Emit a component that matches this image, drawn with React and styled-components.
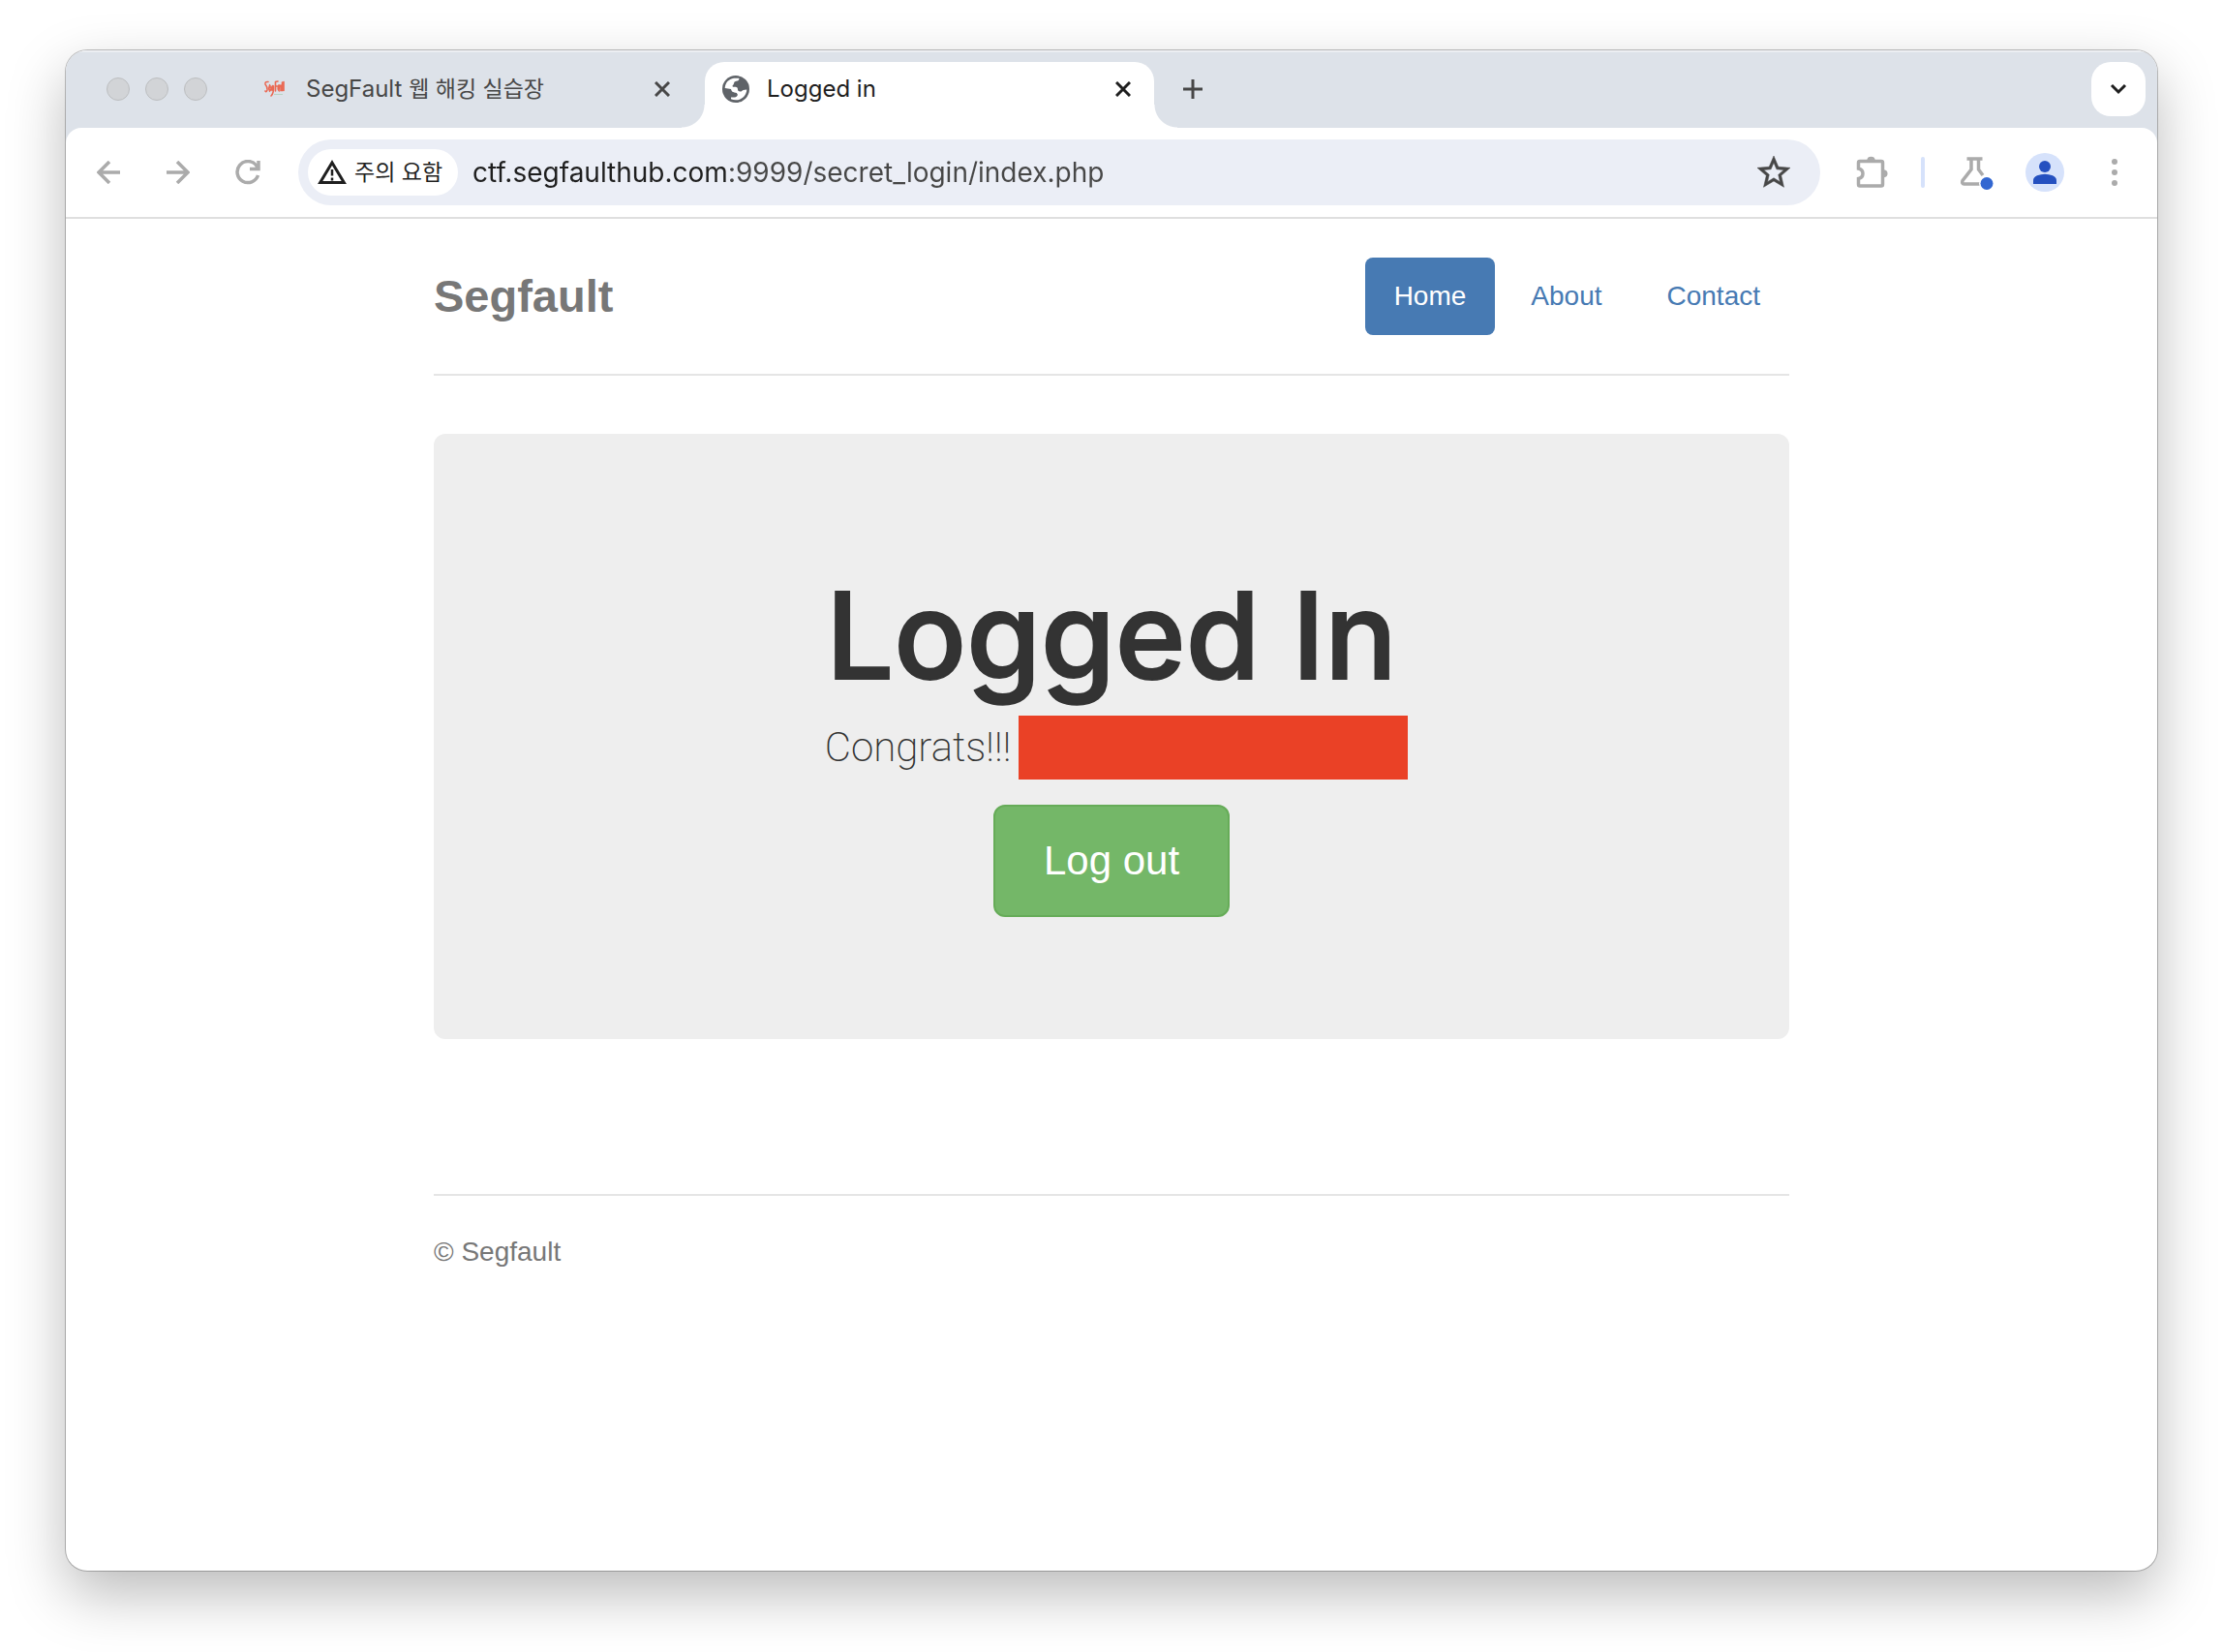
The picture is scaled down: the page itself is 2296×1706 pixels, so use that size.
import React from "react";
import styled, { createGlobalStyle, css } from "styled-components";

const UI_FONT = `Inter, "Noto Sans CJK KR", sans-serif`;
const PAGE_FONT = `"Liberation Sans", Arial, sans-serif`;

const GlobalStyle = createGlobalStyle`
  *, *::before, *::after { box-sizing: border-box; }
  body { margin: 0; background: #fff; font-family: ${UI_FONT}; }
  h1, h3, p { margin: 0; }
  button { border: 0; background: none; padding: 0; font: inherit; cursor: pointer; }
  svg { display: block; flex: none; }
`;

const Desktop = styled.div`
  display: flex;
  min-height: 100vh;
  padding: 52px 68px 84px;
`;

const Window = styled.div`
  display: flex;
  flex-direction: column;
  flex: 1;
  min-width: 0;
  overflow: hidden;
  border-radius: 22px;
  background: #fff;
  box-shadow: 0 0 0 1px rgba(0, 0, 0, 0.24), 0 24px 60px rgba(0, 0, 0, 0.27);
`;

/* Tab strip */

const TabStrip = styled.div`
  display: flex;
  height: 80px;
  padding: 12px 12px 0 42px;
  background: #dde2e9;
  box-shadow: inset 0 2px 0 #eceef2;
`;

const Lights = styled.div`
  display: flex;
  align-items: center;
  gap: 16px;
  height: 56px;
  margin-right: 38px;
`;

const Light = styled.button`
  width: 24px;
  height: 24px;
  border: 1px solid #bcbec0;
  border-radius: 50%;
  background: #d2d4d7;
`;

const Tabs = styled.div`
  display: flex;
  gap: 12px;
`;

const flare = css`
  content: "";
  position: absolute;
  bottom: 0;
  width: 24px;
  height: 24px;
`;

const Tab = styled.div`
  position: relative;
  display: flex;
  width: 464px;
  padding: 0 16px 12px 18px;
  align-items: center;
  gap: 18px;
  border-radius: 20px 20px 0 0;
  color: ${(p) => (p.$active ? "#1f1f1f" : "#474747")};
  background: ${(p) => (p.$active ? "#fff" : "transparent")};
  ${(p) =>
    p.$active &&
    css`
      &::before {
        ${flare}
        right: 100%;
        background: radial-gradient(circle at 0 0, transparent 23px, #fff 24px);
      }
      &::after {
        ${flare}
        left: 100%;
        background: radial-gradient(circle at 100% 0, transparent 23px, #fff 24px);
      }
    `}
`;

const TabTitle = styled.span`
  flex: 1;
  font-size: 24px;
  line-height: 32px;
  white-space: nowrap;
`;

const Hangul = styled.span`
  font-size: 23px;
`;

const IconButton = styled.button`
  display: flex;
  align-items: center;
  justify-content: center;
  width: ${(p) => p.$size || 48}px;
  height: ${(p) => p.$size || 48}px;
  color: ${(p) => p.$color || "#ababab"};
`;

const NewTab = styled(IconButton)`
  height: 56px;
  margin-left: 20px;
`;

const TabSearch = styled(IconButton)`
  margin-left: auto;
  border-radius: 20px;
  background: #fff;
`;

/* Toolbar */

const ToolbarBack = styled.div`
  background: #dde2e9;
`;

const Toolbar = styled.div`
  display: flex;
  align-items: center;
  gap: 28px;
  height: 94px;
  padding: 0 20px;
  border-bottom: 2px solid #dfdfdf;
  border-radius: 16px 16px 0 0;
  background: #fff;
`;

const NavButtons = styled.div`
  display: flex;
  gap: 24px;
`;

const Omnibox = styled.form`
  display: flex;
  flex: 1;
  align-items: center;
  min-width: 0;
  height: 68px;
  padding: 0 24px 0 10px;
  border-radius: 34px;
  background: #ebeef6;
`;

const SiteChip = styled.button`
  display: flex;
  flex: none;
  align-items: center;
  gap: 8px;
  height: 48px;
  padding: 0 16px 0 10px;
  border-radius: 24px;
  background: #fff;
  color: #1f1f1f;
  font-size: 23px;
  line-height: 32px;
`;

const Address = styled.input`
  flex: 1;
  min-width: 0;
  height: 48px;
  margin-left: 15px;
  padding: 0;
  border: 0;
  outline: 0;
  font-family: ${UI_FONT};
  font-size: 28px;
  color: #474747;
  /* host in the darker tone, port and path in the lighter one */
  background: linear-gradient(90deg, #1f1f1f 267px, #474747 267px);
  background-clip: text;
  -webkit-background-clip: text;
  -webkit-text-fill-color: transparent;
`;

const Divider = styled.span`
  width: 4px;
  height: 32px;
  border-radius: 2px;
  background: #d6e2fb;
`;

const Avatar = styled(IconButton)`
  border-radius: 50%;
  background: #d6e2fb;
`;

/* Web page */

const Container = styled.div`
  width: 100%;
  max-width: 1400px;
  margin: 0 auto;
  padding-top: 40px;
  font-family: ${PAGE_FONT};
  font-size: 28px;
  line-height: 40px;
  color: #333;
`;

const Header = styled.header`
  display: flex;
  align-items: center;
  justify-content: space-between;
  margin-bottom: 60px;
  padding-bottom: 40px;
  border-bottom: 2px solid #e5e5e5;
`;

const Brand = styled.h3`
  font-size: 47px;
  font-weight: 700;
  line-height: 56px;
  color: #777;
`;

const Nav = styled.nav`
  display: flex;
  gap: 7px;
`;

const NavLink = styled.a`
  padding: 20px 30px;
  border-radius: 8px;
  text-decoration: none;
  color: ${(p) => (p.$active ? "#fff" : "#477ab3")};
  background: ${(p) => (p.$active ? "#477ab3" : "transparent")};
`;

const Jumbotron = styled.main`
  display: flex;
  flex-direction: column;
  align-items: center;
  padding: 140px 96px 126px;
  border-radius: 12px;
  background: #eee;
`;

const Title = styled.h1`
  font-family: ${UI_FONT};
  font-size: 124px;
  font-weight: 500;
  line-height: 136px;
  -webkit-text-stroke: 2px #333;
`;

const Message = styled.p`
  display: flex;
  align-items: center;
  gap: 8px;
  margin: 15px 0 26px;
  padding-left: 10px;
  font-family: Roboto, sans-serif;
  font-size: 42px;
  font-weight: 200;
  line-height: 60px;
`;

const Redaction = styled.span`
  width: 402px;
  height: 66px;
  background: #ea4126;
`;

const LogOut = styled.button`
  height: 116px;
  padding: 0 50px;
  border: 2px solid #66ac58;
  border-radius: 12px;
  background: #74b768;
  color: #fff;
  font-size: 42px;
  line-height: 56px;
`;

const Footer = styled.footer`
  margin-top: 160px;
  padding: 38px 0;
  border-top: 2px solid #e5e5e5;
  color: #777;
`;

/* Icons */

const Stroke = ({ w, h, width = 3, children }) => (
  <svg width={w} height={h} viewBox={`0 0 ${w} ${h}`} fill="none" stroke="currentColor" strokeWidth={width} aria-hidden="true">
    {children}
  </svg>
);

const SegfaultIcon = () => (
  <Stroke w={28} h={28} width={1.6}>
    <g stroke="#ea6a55" strokeLinecap="round">
      <path d="M7 6.500 Q3.500 6 4 9 Q6.500 12 6 15 Q5 17.500 4 16" />
      <path d="M7.500 14 Q10 11 8.500 10 Q7 13 8.500 16 Q10 15 10.500 12 M12 10.500 Q10 12 11 15 Q12.500 14 12.500 10.500 Q13 18 10 21" />
      <path d="M14.500 6.500 V16 M14.500 6.500 L17 6 M14.500 11 H16.500 M17.800 10 Q16.500 14 18 15.500 L18.500 10 M20 10 V15.500 H21.500 V7 M23 6.500 V15.500" />
    </g>
    <path d="M13 19.500 H22" stroke="#b9d3c4" strokeWidth="1" />
  </Stroke>
);

const GlobeIcon = () => (
  <svg width="28" height="28" viewBox="0 0 28 28" aria-hidden="true">
    <circle cx="14" cy="14" r="14" fill="#5f6368" />
    <path
      fill="#fff"
      d="M2.700 13 C3 7.500 6.500 3.600 12 2.800 H17.500 Q17.500 5.800 14.500 5.800 Q12 6 12 8 Q12 9.500 10.800 10 Q10 11.800 12 11.800 H14 Q16 12 16 14 V15.300 Q17.500 17 19.500 16.500 Q21 14.500 25.300 14.500 C25 20.500 20.500 25.300 14 25.300 Q11 25.300 9 24.200 V22.500 H12.500 Q16 22 15.800 19.500 Q15.500 17.500 12.500 17.500 Q9.500 17 9 14 Z"
    />
  </svg>
);

const CloseIcon = () => (
  <Stroke w={16} h={16}>
    <path d="M1 1 L15 15 M15 1 L1 15" />
  </Stroke>
);

const PlusIcon = () => (
  <Stroke w={20} h={20}>
    <path d="M10 0 V20 M0 10 H20" />
  </Stroke>
);

const ChevronIcon = () => (
  <Stroke w={18} h={12} width={3}>
    <path d="M2 2 L9 9 L16 2" />
  </Stroke>
);

const BackIcon = () => (
  <Stroke w={24} h={24} width={3.5}>
    <path d="M24 12 H2 M13 1 L2 12 L13 23" />
  </Stroke>
);

const ForwardIcon = () => (
  <Stroke w={24} h={24} width={3.5}>
    <path d="M0 12 H22 M11 1 L22 12 L11 23" />
  </Stroke>
);

const ReloadIcon = () => (
  <Stroke w={26} h={26} width={3.5}>
    <path d="M23.500 16 A11 11 0 1 1 21.500 5.500 L23 8" />
    <path d="M24 1 V9.500 H15" />
  </Stroke>
);

const WarningIcon = () => (
  <Stroke w={30} h={26} width={3}>
    <path d="M15 3 L27.300 23.500 H2.700 Z" />
    <path d="M15 10 V16.500 M15 18.500 V21.500" strokeWidth="2.500" />
  </Stroke>
);

const StarIcon = () => (
  <svg width="34" height="34" viewBox="2 2 20 20" aria-hidden="true" fill="currentColor" stroke="currentColor" strokeWidth="0.300">
    <path d="M22 9.240l-7.190-.620L12 2 9.190 8.630 2 9.240l5.460 4.730L5.820 21 12 17.270 18.180 21l-1.630-7.030L22 9.240zM12 15.400l-3.760 2.270 1-4.280-3.320-2.880 4.380-.380L12 6.100l1.710 4.040 4.380.380-3.320 2.880 1 4.280L12 15.400z" />
  </svg>
);

const PuzzleIcon = () => (
  <Stroke w={40} h={42} width={3.5}>
    <path d="M7.500 11 Q7.500 9.500 9 9.500 H31 Q32.500 9.500 32.500 11 V33.500 Q32.500 35 31 35 H9 Q7.500 35 7.500 33.500 V27.500 Q12 26.500 12 22.200 Q12 18 7.500 17 Z" />
    <path d="M17 9 Q17 5.500 20.500 5.500 Q24 5.500 24 9 Z M33 19 Q36.800 19 36.800 22.300 Q36.800 25.500 33 25.500 Z" fill="currentColor" strokeWidth="1.500" />
  </Stroke>
);

const FlaskIcon = () => (
  <Stroke w={40} h={36} width={3.5}>
    <path d="M11.500 4 H27.500" />
    <path d="M16 4 V15 L7 26.500 Q6 30 8.500 30 H25 M23.500 4 V15 L28 21" />
    <circle cx="32" cy="29.500" r="8" fill="#fff" stroke="none" />
    <circle cx="32" cy="29.500" r="6.500" fill="#3367d1" stroke="none" />
  </Stroke>
);

const PersonIcon = () => (
  <svg width="24" height="24" viewBox="0 0 24 24" aria-hidden="true" fill="currentColor">
    <circle cx="12" cy="6" r="6" />
    <path d="M0 24 V20.500 Q0 17 4 15.300 Q12 12.300 20 15.300 Q24 17 24 20.500 V24 Z" />
  </svg>
);

const MenuIcon = () => (
  <svg width="6" height="28" viewBox="0 0 6 28" aria-hidden="true" fill="currentColor">
    <circle cx="3" cy="3" r="3" />
    <circle cx="3" cy="14" r="3" />
    <circle cx="3" cy="25" r="3" />
  </svg>
);

const links = ["Home", "About", "Contact"];

export default function App() {
  return (
    <Desktop>
      <GlobalStyle />
      <Window>
        <TabStrip>
          <Lights>
            <Light aria-label="Close window" />
            <Light aria-label="Minimize window" />
            <Light aria-label="Zoom window" />
          </Lights>
          <Tabs>
            <Tab>
              <SegfaultIcon />
              <TabTitle>
                SegFault <Hangul>웹 해킹 실습장</Hangul>
              </TabTitle>
              <IconButton $size={32} $color="#474747" aria-label="Close tab">
                <CloseIcon />
              </IconButton>
            </Tab>
            <Tab $active>
              <GlobeIcon />
              <TabTitle>Logged in</TabTitle>
              <IconButton $size={32} $color="#1f1f1f" aria-label="Close tab">
                <CloseIcon />
              </IconButton>
            </Tab>
          </Tabs>
          <NewTab $size={40} $color="#474747" aria-label="New tab">
            <PlusIcon />
          </NewTab>
          <TabSearch $size={56} $color="#1f1f1f" aria-label="Search tabs">
            <ChevronIcon />
          </TabSearch>
        </TabStrip>
        <ToolbarBack>
          <Toolbar>
            <NavButtons>
              <IconButton aria-label="Back">
                <BackIcon />
              </IconButton>
              <IconButton aria-label="Forward">
                <ForwardIcon />
              </IconButton>
              <IconButton aria-label="Reload">
                <ReloadIcon />
              </IconButton>
            </NavButtons>
            <Omnibox onSubmit={(e) => e.preventDefault()}>
              <SiteChip type="button">
                <WarningIcon />
                주의 요함
              </SiteChip>
              <Address type="text" aria-label="Address" defaultValue="ctf.segfaulthub.com:9999/secret_login/index.php" />
              <IconButton type="button" $color="#474747" aria-label="Bookmark">
                <StarIcon />
              </IconButton>
            </Omnibox>
            <IconButton aria-label="Extensions">
              <PuzzleIcon />
            </IconButton>
            <Divider />
            <IconButton aria-label="Experiments">
              <FlaskIcon />
            </IconButton>
            <Avatar $size={40} $color="#2450c0" aria-label="Profile">
              <PersonIcon />
            </Avatar>
            <IconButton aria-label="Menu">
              <MenuIcon />
            </IconButton>
          </Toolbar>
        </ToolbarBack>
        <Container>
          <Header>
            <Brand>Segfault</Brand>
            <Nav>
              {links.map((name, i) => (
                <NavLink key={name} href="#" $active={i === 0}>
                  {name}
                </NavLink>
              ))}
            </Nav>
          </Header>
          <Jumbotron>
            <Title>Logged In</Title>
            <Message>
              Congrats!!!
              <Redaction />
            </Message>
            <LogOut type="button">Log out</LogOut>
          </Jumbotron>
          <Footer>© Segfault</Footer>
        </Container>
      </Window>
    </Desktop>
  );
}
